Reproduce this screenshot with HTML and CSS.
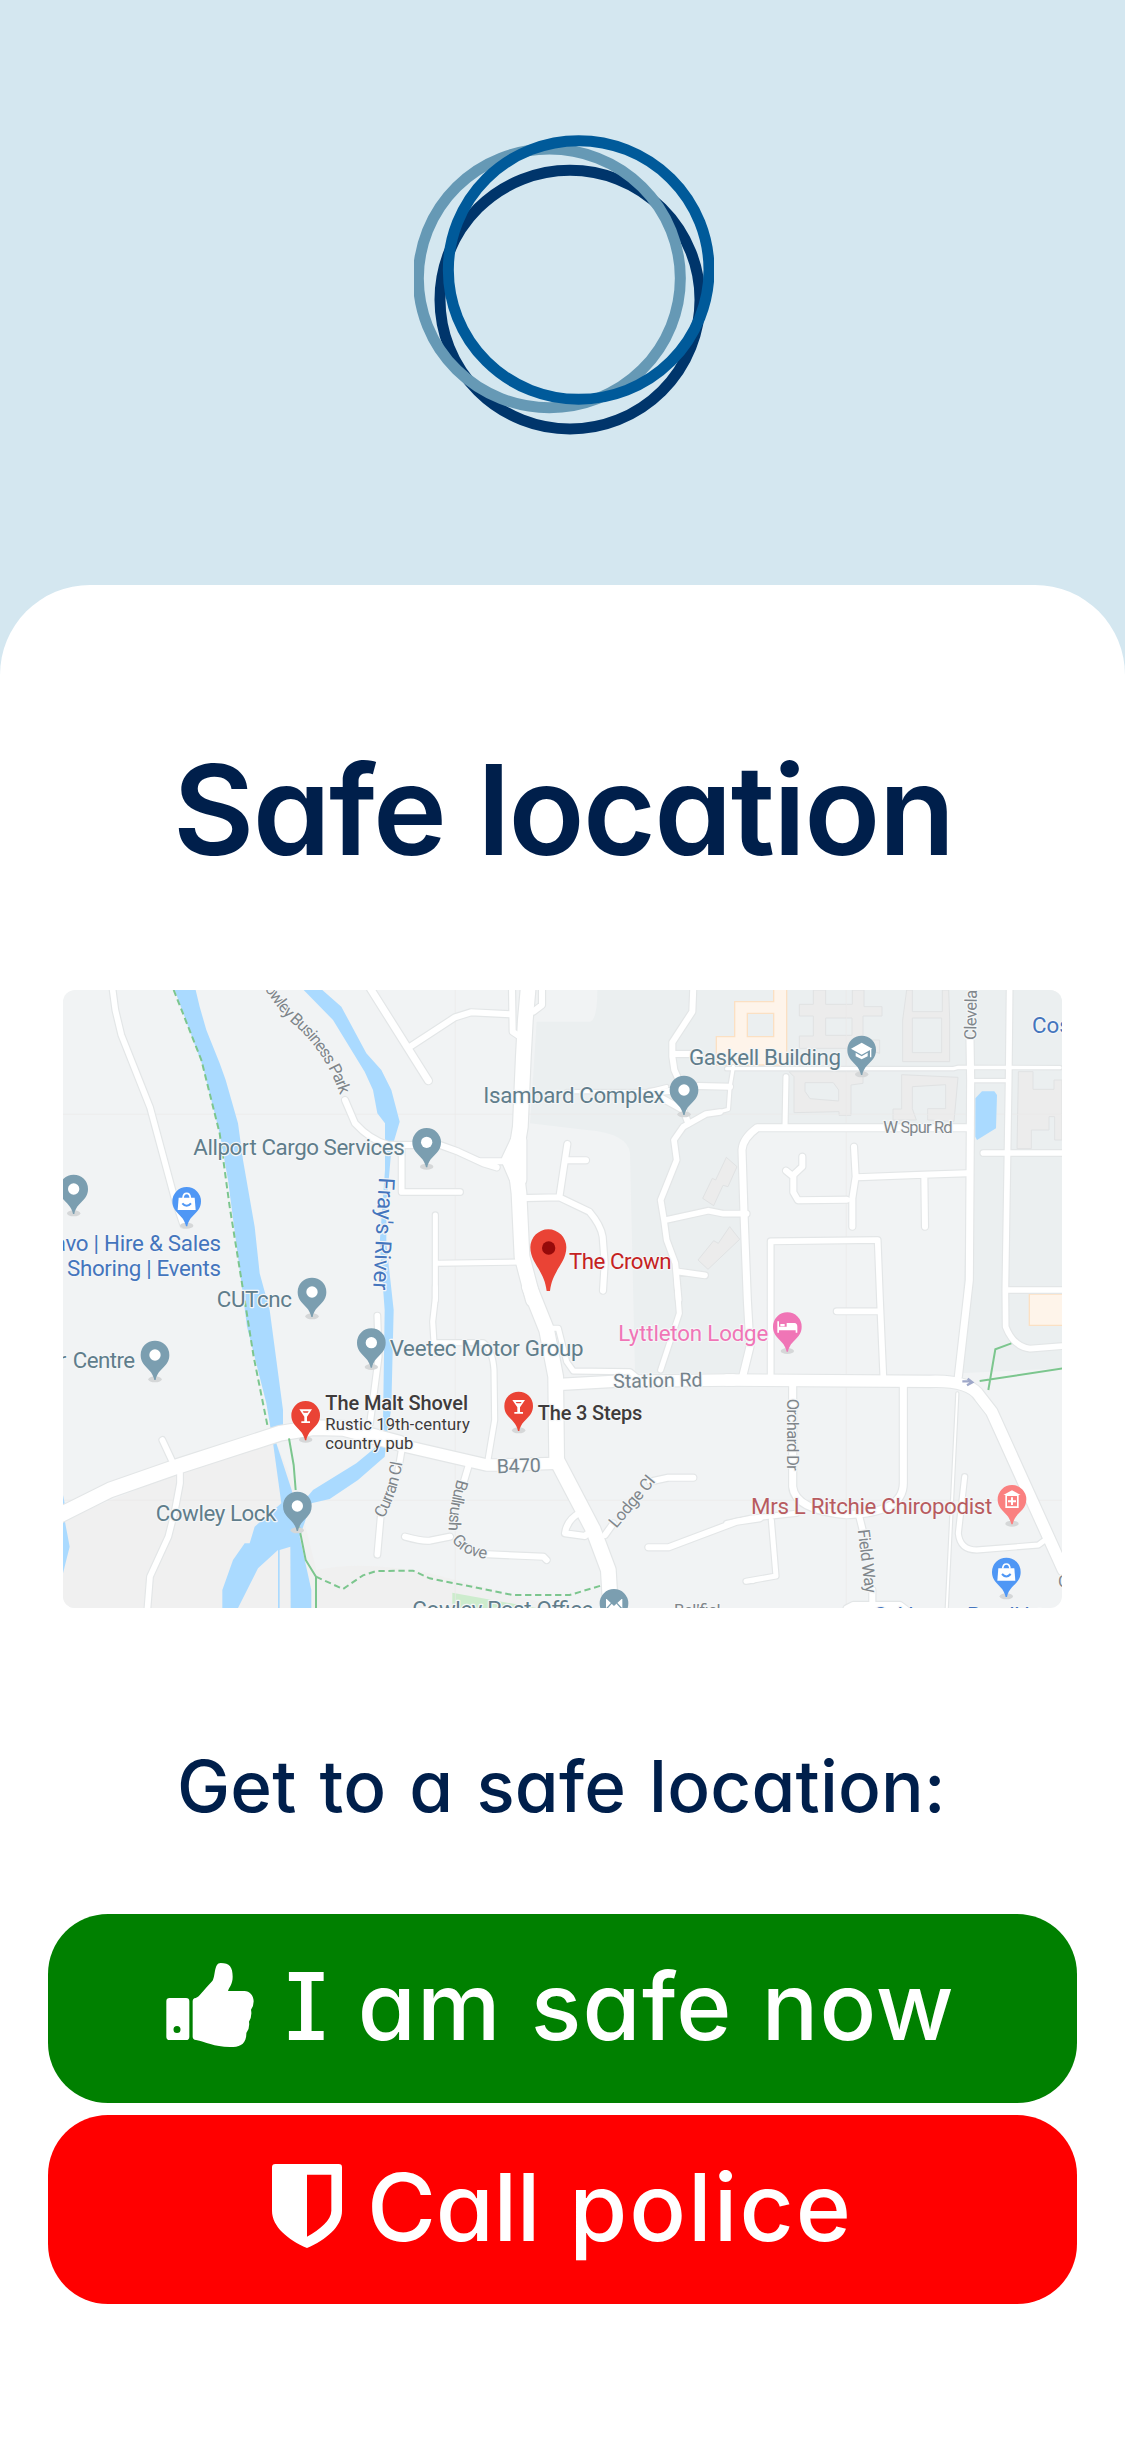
FILE: index.html
```html
<!DOCTYPE html>
<html lang="en">
<head>
<meta charset="utf-8">
<title>Safe location</title>
<link rel="stylesheet" href="styles.css">
</head>
<body>
<header class="banner">
  <svg class="logo" width="300" height="300" viewBox="0 0 900 900" fill="none" stroke-width="33" role="img" aria-label="Logo">
    <ellipse cx="468" cy="494" rx="390" ry="388" stroke="#00356b"/>
    <ellipse cx="406" cy="430" rx="393" ry="388" stroke="#6699b5"/>
    <ellipse cx="494" cy="405" rx="391" ry="388" stroke="#005a9a"/>
  </svg>
</header>
<main class="card">
  <h1 class="title"><span>Safe</span> <span>location</span></h1>
  <svg class="map" viewBox="0 0 2997 1854" preserveAspectRatio="none" role="img" aria-label="Map of nearby safe locations">
    <defs>
      <g id="pin">
        <ellipse cx="0" cy="73" rx="20" ry="9" fill="#d5d7d8"/>
        <path d="M-43 0A43 43 0 0 1 43 0C43 37 9 38 2 75H-2C-9 38 -43 37 -43 0Z"/>
      </g>
      <g id="dot"><use href="#pin"/><circle r="17" fill="#fff"/></g>
      <g id="bag"><use href="#pin"/><path d="M-24 -11H24L27 26H-27Z" fill="#fff"/><path d="M-11 -10Q-10 -24 0 -24T11 -10" fill="none" stroke="#fff" stroke-width="5"/><path d="M-13 6Q0 21 13 6" fill="none" stroke="#4f97f5" stroke-width="6"/></g>
      <g id="glass"><use href="#pin"/><path d="M-19 -18H19L4 4V18H13V23H-13V18H-4V4Z" fill="#fff"/><path d="M-9 -12H9L6 -8H-6Z" fill="#ea4335"/></g>
      <g id="roads" fill="none" stroke-linecap="round" stroke-linejoin="round">
        <g transform="translate(-9 -30)">
          <path class="r16" d="M154 0L166 90L184 165L270 382L345 660L370 735"/>
          <path class="r18" d="M855 360L885 430Q930 480 985 495H1060"/>
          <path class="r20" d="M915 0L1105 302"/>
          <path class="r16" d="M1025 500V636H1200"/>
        </g>
        <g transform="translate(1011 -30)">
          <path class="r18" d="M30 200L165 112L213 97L335 103M336 20L338 155L360 170M426 20V75L400 95"/>
          <path class="r18" d="M120 495L175 515L250 550L290 562M240 544H320"/>
          <path class="r44" d="M384 30L376 120L370 230L361 440L345 540L357 640L366 830L400 960"/>
          <path class="r34" d="M350 480L322 540L352 610M362 480V600"/>
          <path class="r18" d="M502 492L478 652L568 695Q602 735 608 770L614 850L609 932M500 541H558M380 654L478 652"/>
          <path class="r14" d="M106 705V960M110 850L360 846"/>
          <path class="r18" d="M880 20L877 95L817 187V230L823 270L850 330L780 335H750L850 390L865 430M823 222H900M895 318L990 320"/>
          <path class="r10" d="M500 335H740L800 320M1000 260L990 320L985 388L960 395"/>
          <path class="r16" d="M960 396L918 402L850 440L822 480L830 540L782 660L792 720L800 780L826 850L836 960M798 720L925 692L970 701H1040M836 875L915 886"/>
        </g>
        <g transform="translate(2001 -30)">
          <path class="r20" d="M720 443H82Q38 475 36 510L42 700L52 960L60 1100L38 1190"/>
          <path class="r10" d="M-10 266H670L685 262L990 263M725 302H830"/>
          <path class="r14" d="M168 290L165 440"/>
          <path class="r20" d="M720 180L722 300L718 900L685 1190"/>
          <path class="r16" d="M839 20L836 300L826 930L827 1040Q850 1100 900 1106L1000 1098M826 930H1000M760 519H1000"/>
          <path class="r18" d="M372 500L377 590L367 655L367 740M380 592L580 584L710 580M583 590L585 740M350 659L204 661L190 637V585L217 560V530M190 590L168 572"/>
          <path class="r16" d="M122 1190V784L443 780L450 960L460 1190M450 994H320"/>
        </g>
        <g transform="translate(-9 900)">
          <path class="r44" d="M-10 680L150 600L350 530L660 430L760 413L850 415L1020 460"/>
          <path class="r16" d="M307 450L342 525M360 550V580L345 660L325 740L270 860L262 960"/>
          <path class="r16" d="M952 77L956 200L930 400M1025 480L1015 540M962 680L952 794"/>
        </g>
        <g transform="translate(1011 900)">
          <path class="r44" d="M388 -10L440 120L467 260L470 510L580 720L625 840L632 960"/>
          <path class="r34" d="M0 465L260 525H300L465 520"/>
          <path class="r34" d="M480 283L640 274L1000 270"/>
          <path class="r14" d="M455 115H475L500 215L520 243L690 245L715 265M830 -30L838 70L782 240"/>
          <path class="r14" d="M106 -10V25L98 95L104 190M100 158H250Q278 180 282 240L284 390L264 510"/>
          <path class="r18" d="M205 530L190 580M150 740L90 752Q70 755 15 740M265 793L430 800L440 810M540 668Q500 690 495 730L555 738L575 720M615 735L640 700M750 575L805 563H880M745 772H805L1010 695L1080 685"/>
          <path class="r10" d="M1040 874H1060"/>
        </g>
        <g transform="translate(2001 900)">
          <path class="r34" d="M-10 270L600 274Q720 270 750 320L785 365L1000 840"/>
          <path class="r20" d="M188 270V590Q195 660 350 674Q520 670 520 580V280"/>
          <path class="r14" d="M-10 700L60 685L200 670M124 690L138 858L48 874M704 560L685 730Q690 780 740 780L925 765L945 750"/>
          <path class="r5" d="M682 310L650 960"/>
          <path class="r18" d="M388 680L398 720M427 900V950M350 955L370 945H510L530 960"/>
        </g>
      </g>
    </defs>
    <rect width="2997" height="1854" fill="#f1f3f4"/>
    <path fill="#ebeff0" d="M1421 95H1581Q1603 90 1603 0H2997V1135L2691 1150L2721 415H2061L2041 470L2055 1150H1716L1701 490Q1695 430 1571 420L1401 400Z"/>
    <path fill="#f0f0f0" d="M0 1590L340 1450L640 1360L700 1500L760 1740Q900 1710 1100 1750L1500 1854H0Z"/>
    <path fill="#cdeccd" d="M1168 1808L1420 1854H1168Z"/>
    <g fill="#ececec" stroke="#e0e2e3" stroke-width="3">
      <path d="M2251 0V43H2209V78H2251V138H2209V175H2400L2450 190V150H2400V78H2457V50H2403V0H2368V43H2288V0ZM2288 84H2367V136H2288ZM2531 0L2519 90V215H2660V90L2657 0H2638V65H2548V0ZM2548 84H2636V188H2548Z" fill-rule="evenodd"/>
      <path d="M2178 245H2400V280L2364 285V376H2328V365L2193 368V260ZM2226 278V304L2241 326L2327 333V300L2311 278ZM2516 254L2685 262L2673 394L2594 390V356H2648V284L2548 290V356L2560 390H2490V357H2516Z" fill-rule="evenodd"/>
      <path d="M2866 260V245H2910V298H2973V270H2997V450H2975V380H2958V420H2905V476H2862ZM1990 502L2022 530L1995 590L1980 586L1952 647L1919 625L1948 565L1958 570ZM2000 710L2030 748L1935 838L1905 810L1952 752L1966 760Z"/>
    </g>
    <g fill="#fef4ea" stroke="#fbe0c3" stroke-width="4">
      <path d="M2015 35H2132V-5H2171V225H1960V140H2015ZM2053 70V140H2132V70Z" fill-rule="evenodd"/>
      <path d="M2899 912H3010V1006H2899Z"/>
    </g>
    <path stroke="#ebe9e8" stroke-width="2" d="M0 373H2997M0 1531H2997M1177 0V1854M2350 0V1854"/>
    <g fill="#aadaff">
      <path d="M335 0H398L410 50L430 120L470 220L488 270L525 400L540 510L575 710L590 850L620 960L660 1260V1310L640 1360L686 1500L700 1560L750 1500L880 1420L940 1370L960 1300L965 960L950 760L966 540V400L943 370L930 300L905 245L810 90L722 0H778L835 50L910 190L955 240L985 300L1010 395L985 480L970 650V760L992 960L985 1250L965 1400L885 1470L800 1527L745 1540L710 1640L745 1800V1854H683L682 1670L650 1680V1854H645V1680L585 1735L525 1854H478V1800L510 1710L545 1660H560L575 1610L655 1540L630 1358L610 1240L552 1010L538 900L495 570L470 430L420 230Z"/>
      <path d="M0 1515L5 1540V1590L20 1670L0 1750ZM2737 325L2757 304H2794L2802 315L2799 415L2742 450L2737 440Z"/>
    </g>
    <use href="#roads" class="casing"/>
    <use href="#roads" class="surface"/>
    <g fill="none" stroke="#7cc68e" stroke-width="6">
      <path stroke-dasharray="19 11" d="M332 0L415 210L470 430L500 650L545 930L572 1100L615 1315"/>
      <path d="M678 1345L692 1425L698 1500M708 1610L728 1710L759 1760V1854"/>
      <path stroke-dasharray="19 11" d="M759 1760L840 1797L900 1756L940 1743L1050 1742L1100 1765L1350 1815H1520L1620 1785"/>
      <path d="M2750 1173L3000 1135M2776 1200L2797 1078L2845 1060"/>
    </g>
    <path d="M2698 1174H2724M2714 1166L2728 1177L2712 1186" fill="none" stroke="#9fa8c9" stroke-width="7"/>

    <g class="place">
      <text x="391" y="496" textLength="634">Allport Cargo Services</text>
      <text x="1261" y="340" textLength="544">Isambard Complex</text>
      <text x="1878" y="225" textLength="456">Gaskell Building</text>
      <text x="461" y="950" textLength="226">CUTcnc</text>
      <text x="29" y="1134" textLength="187">Centre</text>
      <text x="-13" y="1134">r</text>
      <text x="980" y="1098" textLength="582">Veetec Motor Group</text>
      <text x="278" y="1592" textLength="362">Cowley Lock</text>
      <text x="1048" y="1880" textLength="543">Cowley Post Office</text>
    </g>
    <g class="place blue">
      <text x="-28" y="784" textLength="502">avo | Hire &amp; Sales</text>
      <text x="12" y="859" textLength="462">Shoring | Events</text>
      <text x="2907" y="130">Costa</text>
      <text x="2430" y="1898" textLength="190">Cycle Lan</text>
      <text x="2712" y="1898" textLength="230">Brunel Hot</text>
      <text transform="translate(948 562) rotate(93)" textLength="338">Fray's River</text>
    </g>
    <text class="place red" x="1518" y="838" textLength="308">The Crown</text>
    <text class="place pink" x="1666" y="1053" textLength="450">Lyttleton Lodge</text>
    <text class="place rose" x="2064" y="1572" textLength="724">Mrs L Ritchie Chiropodist</text>
    <g class="bar">
      <text x="787" y="1260" textLength="428">The Malt Shovel</text>
      <text x="1424" y="1290" textLength="314">The 3 Steps</text>
      <text class="note" x="787" y="1320" textLength="434">Rustic 19th-century</text>
      <text class="note" x="787" y="1377" textLength="264">country pub</text>
    </g>
    <g class="street">
      <text class="big" x="1651" y="1194" textLength="268" transform="rotate(-1 1651 1194)">Station Rd</text>
      <text class="big" x="1302" y="1450" textLength="132" transform="rotate(-2 1302 1450)">B470</text>
      <text x="2461" y="430" textLength="208">W Spur Rd</text>
      <text transform="translate(2739 150) rotate(-89)" textLength="150">Clevela</text>
      <text transform="translate(2171 1226) rotate(90)" textLength="216">Orchard Dr</text>
      <text transform="translate(2384 1620) rotate(83)" textLength="192">Field Way</text>
      <text transform="translate(1660 1616) rotate(-50)" textLength="185">Lodge Cl</text>
      <path id="park" fill="none" stroke="none" d="M590 -30Q640 60 700 110Q800 200 840 345"/>
      <text><textPath href="#park" textLength="425">Cowley Business Park</textPath></text>
      <path id="curran" fill="none" stroke="none" d="M962 1586Q1004 1510 1022 1400"/>
      <text><textPath href="#curran" textLength="178">Curran Cl</textPath></text>
      <path id="bull" fill="none" stroke="none" d="M1183 1467Q1158 1545 1156 1630"/>
      <text><textPath href="#bull" textLength="158">Bullrush</textPath></text>
      <path id="grove" fill="none" stroke="none" d="M1166 1650Q1195 1700 1285 1708"/>
      <text><textPath href="#grove" textLength="122">Grove</textPath></text>
      <text x="1833" y="1878" textLength="140">Bellfiel</text>
      <text x="2985" y="1790">C</text>
    </g>

    <g fill="#7b9eb0">
      <use href="#dot" x="32" y="597"/>
      <use href="#dot" x="747" y="906"/>
      <use href="#dot" x="276" y="1095"/>
      <use href="#dot" x="925" y="1058"/>
      <use href="#dot" x="703" y="1548"/>
      <use href="#dot" x="1091" y="457"/>
      <use href="#dot" x="1863" y="300"/>
      <use href="#pin" x="2396" y="180"/>
      <use href="#pin" x="1653" y="1840"/>
    </g>
    <path fill="#fff" d="M2364 176L2396 158L2428 176L2396 194ZM2378 188L2396 199L2414 188V199L2396 208L2378 199ZM2421 178H2425V202H2421Z"/>
    <path fill="#fff" stroke="#7b9eb0" stroke-width="4" d="M1627 1820H1680V1860H1627ZL1653 1845L1680 1820M1627 1860L1645 1840M1680 1860L1662 1840"/>
    <g fill="#4f97f5"><use href="#bag" x="371" y="634"/><use href="#bag" x="2830" y="1746"/></g>
    <g fill="#ea4335">
      <use href="#glass" x="728" y="1276"/>
      <use href="#glass" x="1367" y="1248"/>
      <path d="M1402 772A54 54 0 0 1 1510 772C1510 820 1468 840 1461 903H1451C1444 840 1402 820 1402 772Z"/>
    </g>
    <circle cx="1457" cy="774" r="20" fill="#960a0a"/>
    <use href="#pin" x="2173" y="1010" fill="#f075b6"/>
    <path fill="#fff" d="M2143 994H2148V1010H2171V999H2194Q2203 1000 2203 1010V1028H2198V1021H2148V1028H2143ZM2152 1002H2165V1009H2152Z"/>
    <use href="#pin" x="2847" y="1528" fill="#fa8080"/>
    <path fill="#fff" fill-rule="evenodd" d="M2821 1515L2847 1501L2873 1515H2867V1554H2827V1515ZM2832 1518V1549H2862V1518ZM2844 1522H2850V1531H2859V1537H2850V1545H2844V1537H2835V1531H2844Z"/>
  </svg>
  <p class="lead"><span>Get</span> <span>to</span> <span>a</span> <span>safe</span> <span>location:</span></p>
  <div class="actions">
    <button class="btn btn-safe" type="button">
      <svg width="88" height="84" viewBox="49 54 264 252" aria-hidden="true">
        <path fill="#fff" fill-rule="evenodd" d="M60 159H109Q119 159 119 169V275Q119 285 109 285H60Q50 285 50 275V169Q50 159 60 159ZM82 243A10.500 10.500 0 1 0 82 264A10.500 10.500 0 1 0 82 243ZM129 169Q129 160 138 159C150 155 160 137 188 108C198 96 192 54 213 54C240 54 249 67 249 95C249 118 239 125 235 138H284C300 138 312 152 312 169Q312 184 304 194Q308 214 298 230Q301 251 290 264C291 292 275 306 251 306C195 307 169 291 139 285Q129 284 129 275Z"/>
      </svg>
      <span class="label"><span>I</span> <span>am</span> <span>safe</span> <span>now</span></span>
    </button>
    <button class="btn btn-police" type="button">
      <svg width="70" height="84" viewBox="366 657 210 252" aria-hidden="true">
        <path fill="#fff" fill-rule="evenodd" d="M376 657H566Q576 657 576 667V797C576 845 528 884 471 909C414 884 366 845 366 797V667Q366 657 376 657ZM471 689V875C510 853 544 825 544 797V689Z"/>
      </svg>
      <span class="label"><span class="call">Call</span> <span class="police">police</span></span>
    </button>
  </div>
</main>
</body>
</html>
```

FILE: styles.css
```css
* { box-sizing: border-box; }

body {
  margin: 0;
  background: #d4e7f0;
  color: #001f4b;
  font-family: Inter, "Open Sans", sans-serif;
  font-feature-settings: "cv11" 1, "cv08" 1, "calt" 0;
}

.banner {
  height: 585px;
  padding-top: 135px;
  padding-left: 414px;
}

.logo { display: block; overflow: hidden; }

.card {
  height: 1854px;
  padding: 145px 48px 0;
  background: #fff;
  border-radius: 90px 90px 0 0;
}

.title, .lead, .label {
  display: flex;
  align-items: baseline;
  white-space: nowrap;
}

.title {
  height: 160px;
  margin: 0 0 100px;
  padding-left: 125px;
  gap: 32px;
  font-size: 125px;
  line-height: 160px;
  font-weight: 640;
  letter-spacing: -1.6px;
}

.map {
  display: block;
  width: 999px;
  height: 618px;
  margin-left: 15px;
  border-radius: 12px;
  overflow: hidden;
  font-family: Roboto, "Liberation Sans", sans-serif;
}

.casing { --case: 7px; stroke: #e3e6e7; }
.surface { --case: 0px; stroke: #fff; }
.r5 { stroke-width: calc(6px + var(--case)); }
.r10 { stroke-width: calc(10px + var(--case)); }
.r14 { stroke-width: calc(15px + var(--case)); }
.r16 { stroke-width: calc(17px + var(--case)); }
.r18 { stroke-width: calc(18px + var(--case)); }
.r20 { stroke-width: calc(21px + var(--case)); }
.r34 { stroke-width: calc(34px + var(--case)); }
.r44 { stroke-width: calc(44px + var(--case)); }

.map text { stroke: #f4f6f7; stroke-width: 7px; paint-order: stroke; stroke-linejoin: round; }
.place { font-size: 67px; fill: #607d8b; }
.blue { fill: #4475bd; }
.red { fill: #c5221f; }
.pink { fill: #f075b6; }
.rose { fill: #b85b5f; }
.bar { font-size: 60px; font-weight: 500; fill: #3f3b3b; }
.note { font-size: 50px; font-weight: 400; }
.street { font-size: 50px; fill: #80868b; }
.big { font-size: 59px; fill: #75838c; }

.lead {
  height: 100px;
  margin: 128px 0 78px;
  padding-left: 129px;
  gap: 23px;
  font-size: 71px;
  line-height: 100px;
  font-weight: 500;
  letter-spacing: 0.2px;
}

.actions {
  display: grid;
  gap: 12px;
}

.btn {
  display: flex;
  align-items: center;
  height: 189px;
  padding: 0 0 7px;
  border: 0;
  border-radius: 60px;
  color: #fff;
  font: inherit;
  font-size: 94px;
  font-weight: 480;
  font-feature-settings: inherit;
  letter-spacing: 1.2px;
}

.btn svg { flex: none; }
.btn-safe { background: #008000; padding-left: 118px; gap: 31px; }
.btn-police { background: #f00; padding-left: 224px; gap: 25px; }
.label { gap: 29px; padding-top: 2px; }
.call { letter-spacing: -0.3px; }
.police { letter-spacing: 2px; }
```
